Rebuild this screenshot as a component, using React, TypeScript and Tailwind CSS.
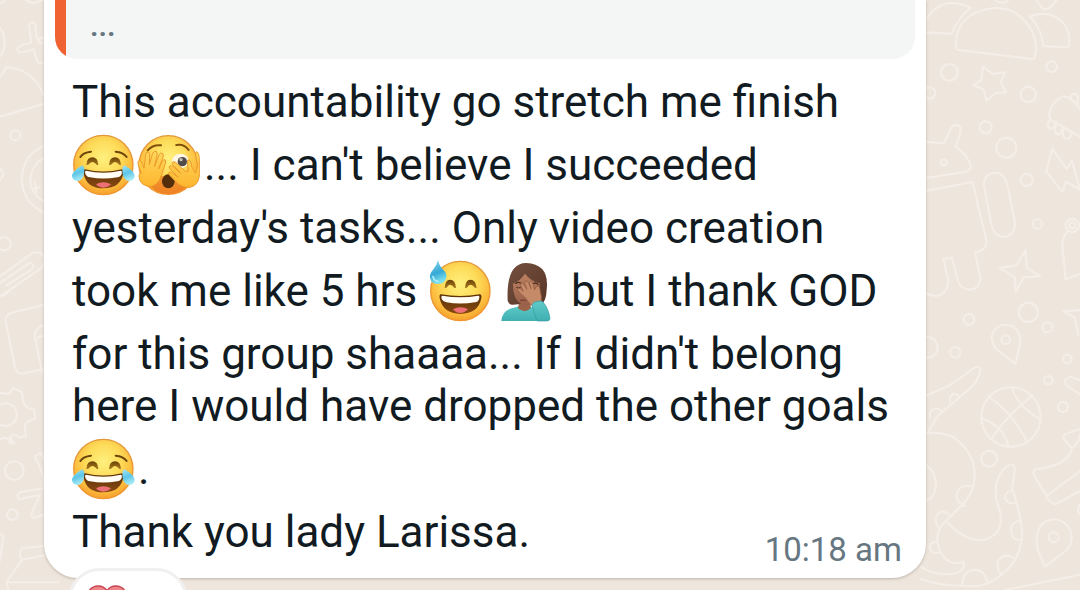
import type { ReactNode } from "react";

function Gradients() {
  return (
    <svg aria-hidden="true" className="absolute h-0 w-0">
      <defs>
        <radialGradient id="face" cx="0.5" cy="0.38" r="0.64">
          <stop offset="0" stopColor="#fff07e" />
          <stop offset="0.45" stopColor="#fddc5a" />
          <stop offset="0.8" stopColor="#fcb83a" />
          <stop offset="1" stopColor="#f19a2c" />
        </radialGradient>
        <linearGradient id="rim" x1="0" y1="0" x2="0" y2="1">
          <stop offset="0" stopColor="#e0983a" />
          <stop offset="1" stopColor="#f4952f" />
        </linearGradient>
        <linearGradient id="tear" x1="0" y1="0" x2="0.3" y2="1">
          <stop offset="0" stopColor="#a9e6f4" />
          <stop offset="0.55" stopColor="#5cc6e8" />
          <stop offset="1" stopColor="#a5e9f4" />
        </linearGradient>
        <linearGradient id="drop" x1="0" y1="0" x2="0.3" y2="1">
          <stop offset="0" stopColor="#8fd6ec" />
          <stop offset="0.6" stopColor="#35a9d6" />
          <stop offset="1" stopColor="#7ee0ee" />
        </linearGradient>
        <linearGradient id="mouth" x1="0" y1="0" x2="0" y2="1">
          <stop offset="0" stopColor="#5a3108" />
          <stop offset="1" stopColor="#8a4a10" />
        </linearGradient>
        <linearGradient id="hand" x1="0" y1="0" x2="0" y2="1">
          <stop offset="0" stopColor="#ffd75c" />
          <stop offset="1" stopColor="#fdb62e" />
        </linearGradient>
        <linearGradient id="eye" x1="0" y1="0" x2="0" y2="1">
          <stop offset="0" stopColor="#6a4108" />
          <stop offset="1" stopColor="#a9791d" />
        </linearGradient>
        <linearGradient id="hair" x1="0" y1="0" x2="1" y2="1">
          <stop offset="0" stopColor="#75503f" />
          <stop offset="1" stopColor="#573527" />
        </linearGradient>
        <linearGradient id="skin" x1="0" y1="0" x2="0" y2="1">
          <stop offset="0" stopColor="#bb8160" />
          <stop offset="1" stopColor="#98604a" />
        </linearGradient>
        <linearGradient id="shirt" x1="0" y1="0" x2="0" y2="1">
          <stop offset="0" stopColor="#5fcac8" />
          <stop offset="1" stopColor="#3fafb2" />
        </linearGradient>
      </defs>
    </svg>
  );
}

function Emoji({ label, viewBox, children }: { label: string; viewBox: string; children: ReactNode }) {
  return (
    <svg
      role="img"
      aria-label={label}
      viewBox={viewBox}
      className="-my-1.5 h-16 w-[66px] shrink-0 overflow-visible"
    >
      {children}
    </svg>
  );
}

function Joy() {
  return (
    <Emoji label="Face with tears of joy" viewBox="36 24 198 192">
      <circle cx="130" cy="120" r="89" fill="url(#face)" stroke="url(#rim)" strokeWidth="4" />
      <g fill="none" stroke="#6b450c" strokeLinecap="round">
        <path d="M61 96Q70 82 93 80M167 80Q190 82 200 96" strokeWidth="6" />
      </g>
      <path d="M79 119Q81 97 97 97Q113 97 115 119Q110 122 107 116Q97 106 88 116Q84 122 79 119Z" fill="url(#eye)" />
      <path d="M147 119Q149 97 165 97Q181 97 183 119Q178 122 175 116Q165 106 156 116Q152 122 147 119Z" fill="url(#eye)" />
      <path d="M75 133Q130 146 186 133Q192 133 190 145Q182 190 130 190Q80 190 71 146Q69 133 75 133Z" fill="url(#mouth)" />
      <path d="M78 137Q130 149 183 137Q187 137 185 147Q182 156 172 157Q130 164 90 157Q79 155 76 146Q74 137 78 137Z" fill="#fffdf6" />
      <path d="M108 178Q130 165 153 178Q143 188 130 188Q117 188 108 178Z" fill="#ee7077" />
      <path d="M66 121Q76 125 72 146Q68 168 51 168Q35 165 36 151Q39 138 66 121Z" fill="url(#tear)" />
      <path d="M194 121Q184 125 188 146Q192 168 209 168Q225 165 224 151Q221 138 194 121Z" fill="url(#tear)" />
    </Emoji>
  );
}

function Peeking() {
  return (
    <Emoji label="Face with peeking eye" viewBox="234 24 198 192">
      <circle cx="325" cy="120" r="88" fill="url(#face)" stroke="url(#rim)" strokeWidth="4" />
      <path d="M263 171Q325 132 393 166Q371 207 325 207Q284 207 263 171Z" fill="#e96b1d" opacity="0.6" />
      <path d="M263 76Q279 58 303 61M349 60Q373 56 386 75" fill="none" stroke="#80500f" strokeWidth="6" strokeLinecap="round" />
      <ellipse cx="361" cy="108" rx="25" ry="22" fill="#fff8e6" />
      <circle cx="367" cy="110" r="14" fill="#514c46" />
      <circle cx="363" cy="104" r="5" fill="#c8c2bb" />
      <ellipse cx="325" cy="169" rx="19" ry="21" fill="#542e0b" />
      <g fill="url(#hand)" stroke="#ee9a2c" strokeWidth="3" strokeLinejoin="round">
        <path d="M244 145L235 119Q231 108 238 106Q244 106 248 119L252 130L257 89Q259 79 266 81Q271 83 269 96L268 119L278 85Q282 76 289 79Q294 83 290 94L284 124L297 89Q301 82 308 85Q312 89 308 99L296 132L306 110Q311 101 316 105Q319 109 315 119L304 152Q295 181 270 185Q239 181 237 155Q237 143 244 145Z" />
        <path d="M407 145L413 121L407 90Q406 79 411 80Q417 82 418 101L418 153Q415 181 390 187Q365 189 349 171L329 151Q323 145 328 141Q333 139 341 147L355 157L330 132Q324 125 331 122Q337 121 345 130L363 145L338 119Q334 112 340 110Q347 109 355 120L376 139L385 139L382 111Q383 102 388 105Q394 110 396 127Z" />
      </g>
    </Emoji>
  );
}

function Sweat() {
  return (
    <Emoji label="Grinning face with sweat" viewBox="21 12 198 192">
      <circle cx="118" cy="108" r="89" fill="url(#face)" stroke="url(#rim)" strokeWidth="4" />
      <path d="M71 98Q73 74 87 74Q103 74 105 98Q100 101 97 95Q87 84 79 95Q75 101 71 98Z" fill="url(#eye)" />
      <path d="M132 98Q134 74 148 74Q164 74 167 98Q162 101 159 95Q148 84 140 95Q136 101 132 98Z" fill="url(#eye)" />
      <path d="M60 118Q118 128 176 118Q183 118 181 130Q172 176 118 177Q66 176 56 130Q54 118 60 118Z" fill="url(#mouth)" />
      <path d="M64 122Q118 132 172 122Q177 122 174 132Q171 142 162 142Q118 149 76 142Q66 140 62 132Q60 122 64 122Z" fill="#fffdf6" />
      <path d="M96 163Q118 151 141 163Q131 174 118 174Q105 174 96 163Z" fill="#ee7077" />
      <path d="M51 16Q55 34 68 46Q79 57 76 68Q72 85 51 87Q31 87 27 69Q25 56 36 44Q47 33 51 16Z" fill="url(#drop)" />
      <path d="M36 65Q39 78 51 79" fill="none" stroke="#b3f0f7" strokeWidth="5" strokeLinecap="round" />
    </Emoji>
  );
}

function Facepalm() {
  return (
    <Emoji label="Woman facepalming" viewBox="219 12 198 192">
      <path d="M241 198Q243 165 278 158L308 150L345 160Q371 174 374 198Z" fill="url(#shirt)" />
      <path d="M295 139H329V160Q312 177 291 160Z" fill="#9a634a" />
      <path d="M260 137Q255 24 316 24Q386 27 377 104Q376 138 361 148L337 143L276 149Q265 151 260 137Z" fill="url(#hair)" />
      <path d="M276 86Q295 80 312 56Q330 79 356 85Q356 151 313 151Q276 145 276 86Z" fill="url(#skin)" />
      <path d="M284 85Q291 80 299 84M337 86Q346 81 351 89" fill="none" stroke="#54301f" strokeWidth="4" strokeLinecap="round" />
      <path d="M286 97Q292 101 299 97" fill="none" stroke="#543123" strokeWidth="3" />
      <path d="M299 137Q306 132 313 137" fill="none" stroke="#7b3f31" strokeWidth="4" strokeLinecap="round" />
      <path d="M314 129L291 108Q287 102 292 100Q297 99 307 109L299 91Q298 84 304 84Q308 86 318 103L311 84Q311 76 317 78Q322 80 330 101L325 82Q327 75 332 80Q337 85 341 105L344 97Q352 89 356 98L361 124Q363 146 352 154L333 152Q323 144 314 129Z" fill="#c58b69" stroke="#8d5840" strokeWidth="2" strokeLinejoin="round" />
      <path d="M333 149Q337 140 350 139Q362 136 366 141Q383 161 387 191Q386 199 376 198H349Q340 181 333 149Z" fill="url(#shirt)" stroke="#36999d" strokeWidth="2" />
    </Emoji>
  );
}

function DoodlesLeft() {
  return (
    <svg
      aria-hidden="true"
      viewBox="0 0 180 1770"
      className="absolute top-0 left-0 h-[590px] w-[60px] fill-none stroke-[#f5eee8]"
      strokeWidth="6"
      strokeLinejoin="round"
      strokeLinecap="round"
    >
      <path d="M0 8Q8 12 14 0M78 0Q100 18 124 0" />
      <path d="M0 84Q17 105 13 139Q9 160 0 170" />
      <path d="M87 76Q91 63 102 69Q109 75 106 88L112 119L140 108M112 119L120 130L140 124M87 76L94 127L62 137Q48 144 54 154Q61 160 74 155L101 148L109 178Q114 193 128 188" />
      <path d="M0 230Q14 214 18 202Q99 207 131 285M0 350L140 309" />
      <circle cx="46" cy="406" r="15" />
      <path d="M140 434Q66 462 66 539Q67 609 140 642M140 469Q92 493 91 541Q93 589 140 607M97 566L120 562M109 576L105 546" />
      <path d="M0 507Q20 522 0 539" />
      <circle cx="12" cy="731" r="20" />
      <path d="M0 829L96 760Q123 748 134 777Q135 795 120 807L0 889M0 849L82 793Q94 784 99 794Q102 804 91 811L19 856" />
      <path d="M0 888Q20 886 30 870" />
      <path d="M140 913L35 938Q14 945 17 964L45 1101Q51 1126 72 1120L140 1105M140 975Q102 979 104 1010L127 1120M107 1018Q124 1003 140 1010" />
      <path d="M0 1178Q18 1181 29 1181L39 1164L64 1176L68 1186Q66 1204 74 1214L85 1226H102L105 1256L86 1264Q78 1267 74 1277L78 1307L61 1313L49 1307Q38 1300 30 1312L42 1330L31 1330Q24 1304 0 1319" />
      <circle cx="17" cy="1244" r="34" />
      <circle cx="43" cy="1412" r="28" />
      <circle cx="37" cy="1544" r="16" />
      <path d="M140 1403L127 1364Q119 1356 109 1366Q102 1370 109 1380L131 1430L131 1465L64 1476Q49 1483 54 1493Q62 1502 72 1494L120 1485L96 1536Q91 1549 100 1554L140 1542" />
      <path d="M0 1602Q12 1602 8 1622L0 1682M140 1637L67 1645Q59 1646 60 1670L66 1679L20 1745L25 1770M66 1679L140 1664M20 1747H180" />
    </svg>
  );
}

function DoodlesRight() {
  return (
    <svg
      aria-hidden="true"
      viewBox="0 0 480 1770"
      className="absolute top-0 right-0 h-[590px] w-40 fill-none stroke-[#f5eee8]"
      strokeWidth="6"
      strokeLinejoin="round"
      strokeLinecap="round"
    >
      <path d="M0 94Q30 20 84 10Q119 6 152 24Q118 48 95 101L0 96Z" />
      <path d="M108 144Q104 65 170 37Q263 0 319 68Q360 119 343 174Q333 180 313 174L112 149Z" />
      <path d="M330 49Q388 27 428 67Q454 96 446 139Q440 145 369 137Q369 94 330 49Z" />
      <path d="M226 0Q247 17 266 0M349 0L366 24Q381 34 396 18L410 0" />
      <circle cx="88" cy="217" r="25" />
      <circle cx="395" cy="200" r="16" />
      <circle cx="325" cy="283" r="23" />
      <circle cx="29" cy="279" r="17" />
      <path d="M189 199L217 222L254 217L243 247L258 277L226 279L199 302L191 268L160 256L184 240Z" />
      <circle cx="197" cy="382" r="18" />
      <circle cx="259" cy="443" r="30" />
      <circle cx="320" cy="540" r="18" />
      <path d="M429 289Q393 304 387 345Q389 362 410 369L480 411M429 289Q456 292 480 327" />
      <path d="M452 296Q451 282 464 281Q480 285 471 311M389 360Q378 376 388 385Q400 391 407 370M410 373Q400 390 410 402Q424 408 428 382M432 386Q424 403 433 414Q449 424 457 397" />
      <path d="M397 446L440 507L456 482L480 569L438 545L427 576L379 514Z" />
      <path d="M0 424L72 430L95 381Q106 369 121 380Q123 391 119 407L106 439Q145 466 153 502Q149 512 132 516L0 537M0 576L157 546Q169 585 171 605L200 724Q199 753 165 757L181 834Q179 867 149 869Q118 867 111 832L96 774L70 777L85 840Q84 883 48 888Q10 885 0 860" />
      <circle cx="71" cy="487" r="9" />
      <path d="M192 558Q190 521 225 518Q250 518 261 549L285 669Q285 706 253 711Q222 710 214 674Z" />
      <circle cx="352" cy="672" r="14" />
      <path d="M316 750L321 804L361 829L311 832L287 875L285 832L239 804L290 796Z" />
      <circle cx="457" cy="676" r="20" /><circle cx="457" cy="676" r="9" />
      <path d="M444 692Q424 712 428 751L437 838L480 822M480 930L430 934L464 952L475 1005" />
      <circle cx="325" cy="937" r="29" />
      <circle cx="147" cy="958" r="16" />
      <circle cx="383" cy="982" r="15" />
      <path d="M286 1092L225 1044Q208 1012 222 993Q243 963 281 981Q306 1001 299 1037Z" />
      <circle cx="257" cy="1019" r="13" />
      <circle cx="106" cy="1057" r="16" />
      <circle cx="22" cy="1042" r="31" />
      <circle cx="442" cy="1077" r="13" />
      <circle cx="385" cy="1141" r="13" />
      <path d="M20 1186L85 1158Q131 1129 164 1102Q178 1096 182 1107Q174 1148 144 1170L53 1248L22 1300M480 1141L451 1130Q430 1137 437 1154L480 1183" />
      <circle cx="273" cy="1251" r="89" />
      <path d="M205 1188Q278 1240 320 1323M216 1314Q259 1249 336 1187M184 1254Q256 1283 265 1340M276 1162Q289 1215 360 1258" />
      <path d="M30 1252Q25 1228 47 1226Q62 1227 69 1235M91 1207Q86 1189 101 1181Q112 1181 116 1188" />
      <circle cx="429" cy="1221" r="15" />
      <circle cx="207" cy="1376" r="24" />
      <path d="M0 1302Q85 1287 123 1331Q165 1370 164 1432Q161 1484 123 1518L65 1576Q43 1606 57 1645Q76 1699 132 1687Q137 1723 72 1723Q35 1720 0 1700M20 1396Q49 1418 48 1458Q45 1490 21 1502" />
      <path d="M84 1569Q139 1626 192 1620Q246 1603 242 1555Q242 1532 230 1503Q219 1443 252 1407Q278 1380 285 1406L276 1466Q300 1528 307 1601Q301 1684 244 1724Q199 1764 142 1758Q66 1759 0 1737" />
      <path d="M154 1460Q119 1449 109 1485Q110 1510 136 1518M88 1543Q58 1522 47 1555Q45 1577 59 1584M54 1626Q33 1624 29 1640Q33 1666 60 1656M277 1472Q253 1475 256 1496Q267 1514 285 1509M302 1563Q272 1564 273 1593Q276 1623 304 1619M282 1674Q253 1657 235 1681Q228 1706 244 1723M127 1757Q128 1709 165 1709Q195 1711 202 1746" />
      <path d="M480 1287L435 1303Q426 1309 434 1320L456 1344Q478 1330 480 1303M456 1344Q449 1395 347 1408Q335 1414 345 1430L388 1503L405 1514L480 1473M379 1488L480 1414" />
      <path d="M374 1700L353 1648Q341 1592 374 1566Q410 1545 442 1576Q469 1614 441 1650Z" />
      <circle cx="401" cy="1612" r="15" />
      <path d="M480 1515Q468 1529 480 1544M256 1770L480 1724" />
    </svg>
  );
}

function Line({ children, tight = false }: { children: ReactNode; tight?: boolean }) {
  return (
    <div className={`flex items-center whitespace-pre leading-[52px] ${tight ? "" : "pt-[11px]"}`}>
      {children}
    </div>
  );
}

export default function App() {
  return (
    <main className="relative h-screen overflow-hidden bg-[#eee6dd] font-['Roboto',sans-serif]">
      <Gradients />
      <DoodlesLeft />
      <DoodlesRight />
      <article className="relative mr-[154px] ml-11 rounded-b-[34px] bg-white pb-3 shadow-[0_1px_3px_rgba(80,65,50,0.3)]">
        <div className="mx-[11px] flex h-[59px] overflow-hidden rounded-b-[22px] bg-[#f4f6f6]">
          <div className="w-[11px] bg-[#f06232]" />
          <blockquote className="pt-2 pl-6 text-[30px] leading-9 font-semibold text-[#667781]">...</blockquote>
        </div>
        <div className="pt-1.5 pr-6 pl-7 text-[44px] text-[#111b21]">
          <Line>This accountability go stretch me finish</Line>
          <Line>
            <Joy />
            <Peeking />
            <span>... I can't believe I succeeded</span>
          </Line>
          <Line>yesterday's tasks... Only video creation</Line>
          <Line>
            <span>took me like 5 hrs </span>
            <Sweat />
            <Facepalm />
            <span> but I thank GOD</span>
          </Line>
          <Line>for this group shaaaa... If I didn't belong</Line>
          <Line tight>here I would have dropped the other goals</Line>
          <Line>
            <Joy />
            <span>.</span>
          </Line>
          <div className="flex items-end justify-between">
            <div className="pb-2">
              <Line>Thank you lady Larissa.</Line>
            </div>
            <time className="text-[33px] leading-8 text-[#667781]">10:18 am</time>
          </div>
        </div>
      </article>
      <button
        type="button"
        aria-label="Heart reaction"
        className="relative -mt-2.5 ml-[68px] flex h-16 w-[120px] items-start rounded-full border-[3px] border-[#f1f0ef] bg-white pt-3.5 pl-[15px]"
      >
        <svg aria-hidden="true" viewBox="0 0 126 114" className="h-[38px] w-[42px]">
          <path
            d="M63 17C51-2 23-1 10 16C-5 39 10 65 63 108C116 65 131 39 116 16C103-1 75-2 63 17Z"
            fill="#f0868c"
            stroke="#c64752"
            strokeWidth="4"
          />
        </svg>
      </button>
    </main>
  );
}
